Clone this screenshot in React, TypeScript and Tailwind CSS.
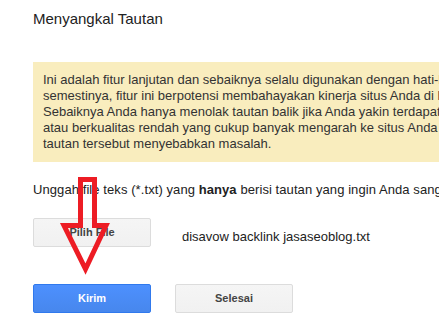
export default function App() {
  return (
    <div className="relative h-[328px] w-[439px] overflow-hidden bg-white font-['Liberation_Sans',Arial,sans-serif] text-[#222]">
      <div className="pl-[33px]">
        <h1 className="pt-[10px] text-[15px] leading-[18px] font-normal text-[#222]">Menyangkal Tautan</h1>

        <div className="mt-[34px] w-[560px] bg-[#f9edbe] px-[10px] py-[10px] text-[13px] leading-[16px] whitespace-nowrap text-[#333]">
          <p>Ini adalah fitur lanjutan dan sebaiknya selalu digunakan dengan hati-hati. Jika digunakan tidak</p>
          <p>semestinya, fitur ini berpotensi membahayakan kinerja situs Anda di hasil penelusuran Google.</p>
          <p>Sebaiknya Anda hanya menolak tautan balik jika Anda yakin terdapat tautan spam, buatan,</p>
          <p>atau berkualitas rendah yang cukup banyak mengarah ke situs Anda dan Anda yakin bahwa</p>
          <p>tautan tersebut menyebabkan masalah.</p>
        </div>

        <p className="mt-[20px] text-[13px] leading-[16px] tracking-[0.08px] whitespace-nowrap">
          Unggah file teks (*.txt) yang <b>hanya</b> berisi tautan yang ingin Anda sangkal.
        </p>

        <div className="mt-[20px] flex items-start gap-[31px]">
          <button className="h-[29px] w-[118px] rounded-[2px] border border-[#dcdcdc] bg-gradient-to-b from-[#f5f5f5] to-[#f1f1f1] text-[11px] font-bold text-[#444]">
            Pilih File
          </button>
          <span className="mt-[11px] text-[13px] leading-[16px] whitespace-nowrap">disavow backlink jasaseoblog.txt</span>
        </div>

        <div className="mt-[37px] flex gap-[24px]">
          <button className="h-[29px] w-[118px] rounded-[2px] border border-[#3079ed] bg-gradient-to-b from-[#4d90fe] to-[#4787ed] text-[11px] font-bold text-white">
            Kirim
          </button>
          <button className="h-[29px] w-[118px] rounded-[2px] border border-[#dcdcdc] bg-gradient-to-b from-[#f5f5f5] to-[#f1f1f1] text-[11px] font-bold text-[#444]">
            Selesai
          </button>
        </div>
      </div>

      {/* red annotation arrow drawn over the page */}
      <svg className="pointer-events-none absolute top-0 left-0" width="439" height="328" viewBox="0 0 439 328">
        <path
          d="M80.5 179.5 L94.5 179.5 L94.5 225.5 L106 225.5 L85.5 269 L64 225.5 L80.5 225.5 Z"
          fill="none"
          stroke="#ed1c24"
          strokeWidth="5"
          strokeLinejoin="miter"
        />
      </svg>
    </div>
  )
}
